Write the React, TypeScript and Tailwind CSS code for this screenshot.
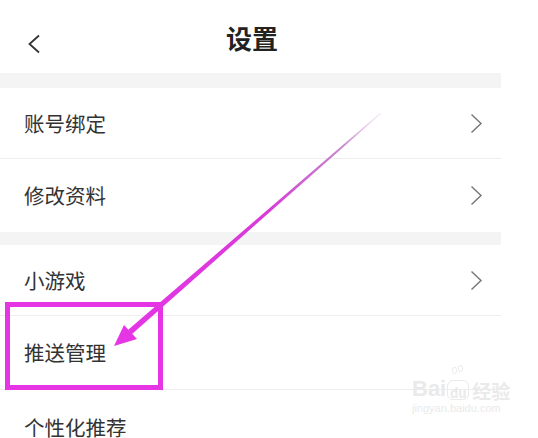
const ROWS_A = ['账号绑定', '修改资料'];

function Chevron() {
  return (
    <svg width="13" height="21" viewBox="0 0 13 21" className="shrink-0">
      <polyline points="1.5,1.5 11,10.5 1.5,19.5" fill="none" stroke="#7a7a7a" strokeWidth="1.5" />
    </svg>
  );
}

function Row({ label, arrow = true, h, divider = true }: { label: string; arrow?: boolean; h: string; divider?: boolean }) {
  return (
    <div className={`flex items-center justify-between pl-[24px] pr-[18px] ${h} ${divider ? 'border-b border-[#eeeeee]' : ''}`}>
      <span className="text-[20.5px] leading-none text-[#333333]">{label}</span>
      {arrow && <Chevron />}
    </div>
  );
}

export default function App() {
  return (
    <div
      className="relative h-[438px] w-[538px] overflow-hidden bg-white"
      style={{ fontFamily: '"Noto Sans CJK SC", "Noto Sans", sans-serif' }}
    >
      <div className="w-[501px]">
        <div className="relative flex h-[73px] items-center justify-center">
          <svg width="14" height="20" viewBox="0 0 14 20" className="absolute left-[27px] top-[34px]">
            <polyline points="12,1.5 2.5,10 12,18.5" fill="none" stroke="#333333" strokeWidth="1.8" />
          </svg>
          <span className="pl-[3px] pt-[2px] text-[26px] font-bold leading-none text-[#222222]">设置</span>
        </div>
        <div className="h-[15px] bg-[#f4f4f4]" />
        <Row label={ROWS_A[0]} h="h-[71px]" />
        <Row label={ROWS_A[1]} h="h-[73px]" divider={false} />
        <div className="h-[13px] bg-[#f4f4f4]" />
        <Row label="小游戏" h="h-[71px]" />
        <Row label="推送管理" arrow={false} h="h-[74px]" />
        <Row label="个性化推荐" arrow={false} h="h-[74px]" divider={false} />
      </div>

      {/* highlight box */}
      <div className="absolute left-[5px] top-[302px] h-[88px] w-[158px] border-[5px] border-[#e535e5]" />

      {/* annotation arrow */}
      <svg className="absolute left-0 top-0" width="538" height="438" viewBox="0 0 538 438">
        <defs>
          <linearGradient id="shaft" gradientUnits="userSpaceOnUse" x1="381" y1="113" x2="130" y2="332">
            <stop offset="0" stopColor="#e9d3ea" stopOpacity="0.4" />
            <stop offset="0.15" stopColor="#b86bbd" stopOpacity="0.8" />
            <stop offset="0.45" stopColor="#d83ad8" />
            <stop offset="1" stopColor="#e535e5" />
          </linearGradient>
        </defs>
        <polygon points="381.4,113.4 380.6,112.6 128.2,329.8 131.8,334.2" fill="url(#shaft)" />
        <polygon points="114,346 124,325 137,339" fill="#e535e5" />
      </svg>

      {/* watermark */}
      <div className="absolute left-[412px] top-[378px] flex flex-col items-start text-[#eaeaea]">
        <div className="flex items-end gap-[1px]">
          <span className="text-[22px] font-bold leading-none" style={{ fontFamily: '"Liberation Sans", sans-serif' }}>Bai</span>
          <span className="relative flex h-[20px] w-[22px] items-end justify-center rounded-[6px] border border-[#eaeaea] text-[13px] font-bold leading-none">
            <span className="absolute -top-[14px] left-[4px] h-[7px] w-[5px] rounded-full border border-[#eaeaea]" />
            <span className="absolute -top-[16px] left-[10px] h-[7px] w-[5px] rounded-full border border-[#eaeaea]" />
            du
          </span>
          <span className="ml-[2px] text-[19px] font-bold leading-none">经验</span>
        </div>
        <span className="mt-[3px] text-[11px] leading-none" style={{ fontFamily: '"Liberation Sans", sans-serif' }}>jingyan.baidu.com</span>
      </div>
    </div>
  );
}
